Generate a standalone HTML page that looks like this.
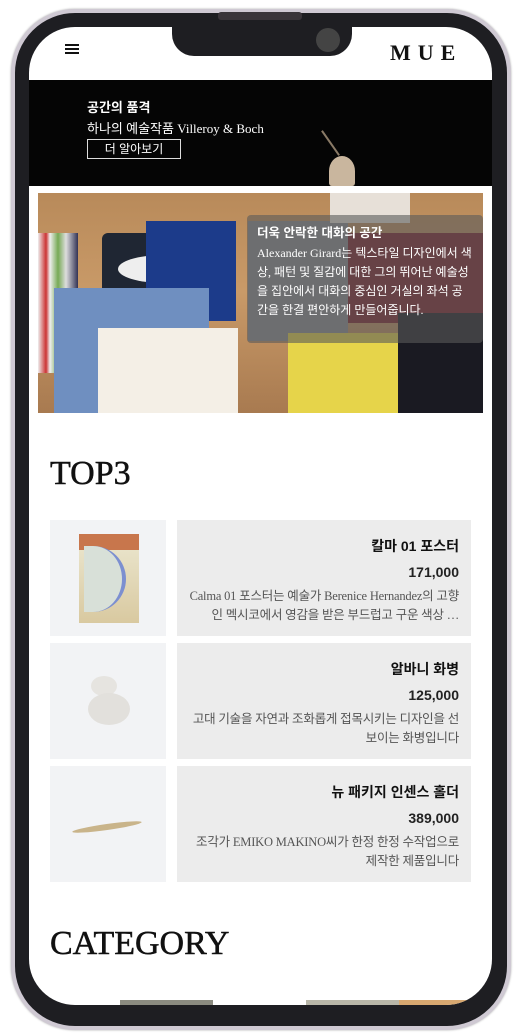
<!DOCTYPE html>
<html><head><meta charset="utf-8"><style>
*{margin:0;padding:0;box-sizing:border-box}
body{width:521px;height:1036px;background:#fff;position:relative;overflow:hidden;font-family:"Liberation Serif","Noto Serif CJK SC",serif}
.frame{position:absolute;left:11px;top:9px;width:500px;height:1021px;border-radius:64px;background:#1e1e22;border:4px solid #cfc9d3;box-shadow:0 0 2px #aaa}
.screen{position:absolute;left:29px;top:27px;width:463px;height:978px;border-radius:46px;background:#fff;overflow:hidden}
.notch{position:absolute;left:172px;top:27px;width:180px;height:29px;background:#1e1e22;border-radius:0 0 22px 22px}
.spk{position:absolute;left:218px;top:12px;width:84px;height:8px;background:#3a353a;border-radius:3px}
.cam{position:absolute;left:316px;top:28px;width:24px;height:24px;border-radius:50%;background:#444}
.sans{font-family:"Liberation Sans","Noto Sans CJK KR",sans-serif}
.ab{position:absolute}
.row{position:absolute;left:21px;width:421px;height:116px}
.img{position:absolute;left:0;top:0;width:116px;height:116px;background:#f2f3f5}
.info{position:absolute;left:127px;top:0;width:294px;height:116px;background:#ececec;text-align:right;padding:16px 12px 0 8px}
.t{font-family:"Liberation Sans","Noto Sans CJK KR",sans-serif;font-size:14px;font-weight:bold;color:#111;height:20px}
.p{font-family:"Liberation Sans","Noto Sans CJK KR",sans-serif;font-size:14px;font-weight:bold;color:#222;margin-top:8px;height:20px}
.d{font-size:12.5px;color:#555;line-height:19px;margin-top:3px;font-family:"Liberation Serif","Noto Sans CJK KR",serif;letter-spacing:-0.2px}
h2{position:absolute;left:21px;font-size:34px;font-weight:normal;color:#111;-webkit-text-stroke:0.5px #111}
</style></head><body>
<div class="frame"></div>
<div class="spk"></div>
<div class="screen">
  <div class="ab" style="left:36px;top:17px;width:14px;height:2px;background:#111;box-shadow:0 4px 0 #111,0 8px 0 #111"></div>
  <div class="ab" style="left:361px;top:13px;font-size:22px;font-weight:bold;letter-spacing:7px;color:#111">MUE</div>
  <div class="ab" style="left:0;top:53px;width:463px;height:106px;background:#050505">
    <div class="ab sans" style="left:58px;top:17px;color:#fff;font-size:13px;font-weight:bold">공간의 품격</div>
    <div class="ab" style="left:58px;top:38px;color:#fff;font-size:13px;font-family:'Liberation Serif','Noto Sans CJK KR',serif">하나의 예술작품 Villeroy &amp; Boch</div>
    <div class="ab sans" style="left:58px;top:59px;width:94px;height:20px;border:1px solid #ddd;color:#fff;font-size:12px;text-align:center;line-height:18px">더 알아보기</div>
    <div class="ab" style="left:300px;top:76px;width:26px;height:30px;background:#c9b69e;border-radius:50% 50% 10% 10%"></div>
    <div class="ab" style="left:298px;top:40px;width:30px;height:30px;border-left:2px solid #8a7a66;transform:rotate(-35deg)"></div>
  </div>
  <div class="ab" style="left:9px;top:166px;width:445px;height:220px;background:linear-gradient(180deg,#b88a5a 0,#c99a68 45%,#a87a50 100%);overflow:hidden">
    <div class="ab" style="left:0;top:40px;width:40px;height:140px;background:linear-gradient(90deg,#eee,#c33 20%,#eee 30%,#7a5 50%,#ddd 70%,#335)"></div>
    <div class="ab" style="left:64px;top:40px;width:120px;height:80px;background:#1f2633;border-radius:6px"></div>
    <div class="ab" style="left:80px;top:62px;width:90px;height:28px;background:#eee;border-radius:50%"></div>
    <div class="ab" style="left:108px;top:28px;width:90px;height:100px;background:#1c3b8a"></div>
    <div class="ab" style="left:16px;top:95px;width:155px;height:125px;background:#6f8fc0"></div>
    <div class="ab" style="left:60px;top:135px;width:140px;height:85px;background:#f4efe6"></div>
    <div class="ab" style="left:210px;top:28px;width:100px;height:120px;background:#8a8d92"></div>
    <div class="ab" style="left:292px;top:0;width:80px;height:30px;background:#e7e0d8"></div>
    <div class="ab" style="left:310px;top:40px;width:140px;height:90px;background:#7b1f2a"></div>
    <div class="ab" style="left:250px;top:140px;width:130px;height:80px;background:#e6d44a"></div>
    <div class="ab" style="left:360px;top:120px;width:85px;height:100px;background:#1a1a22"></div>
    <div class="ab" style="left:209px;top:22px;width:236px;height:128px;background:rgba(90,90,90,.6);border-radius:4px;padding:7px 10px;color:#fff">
      <div class="sans" style="font-size:12.5px;font-weight:bold">더욱 안락한 대화의 공간</div>
      <div style="font-size:12px;line-height:19px;margin-top:3px;font-family:'Liberation Serif','Noto Sans CJK KR',serif">Alexander Girard는 텍스타일 디자인에서 색상, 패턴 및 질감에 대한 그의 뛰어난 예술성을 집안에서 대화의 중심인 거실의 좌석 공간을 한결 편안하게 만들어줍니다.</div>
    </div>
  </div>
  <h2 style="top:428px">TOP3</h2>
  <div class="row" style="top:493px"><div class="img"><div class="ab" style="left:29px;top:14px;width:60px;height:89px;background:linear-gradient(180deg,#c8764c 0,#c8764c 18%,#e8e2c8 18%,#d9c9a0 100%)"></div><div class="ab" style="left:34px;top:26px;width:42px;height:66px;background:#d8e0d8;border-right:4px solid #7c8fd0;border-radius:0 40px 40px 0"></div></div>
    <div class="info"><div class="t">칼마 01 포스터</div><div class="p">171,000</div><div class="d">Calma 01 포스터는 예술가 Berenice Hernandez의 고향인 멕시코에서 영감을 받은 부드럽고 구운 색상 …</div></div></div>
  <div class="row" style="top:616px"><div class="img"><div class="ab" style="left:41px;top:33px;width:26px;height:20px;background:#e6e4e0;border-radius:50%"></div><div class="ab" style="left:38px;top:50px;width:42px;height:32px;background:#e2e0dc;border-radius:50%"></div></div>
    <div class="info"><div class="t">알바니 화병</div><div class="p">125,000</div><div class="d">고대 기술을 자연과 조화롭게 접목시키는 디자인을 선보이는 화병입니다</div></div></div>
  <div class="row" style="top:739px"><div class="img"><div class="ab" style="left:22px;top:58px;width:70px;height:6px;background:#c9b48a;border-radius:50%;transform:rotate(-8deg)"></div></div>
    <div class="info"><div class="t">뉴 패키지 인센스 홀더</div><div class="p">389,000</div><div class="d">조각가 EMIKO MAKINO씨가 한정 한정 수작업으로 제작한 제품입니다</div></div></div>
  <h2 style="top:898px">CATEGORY</h2>
  <div class="ab" style="left:91px;top:973px;width:93px;height:10px;background:#8b8b80"></div>
  <div class="ab" style="left:277px;top:973px;width:93px;height:10px;background:#b8b6a8"></div>
  <div class="ab" style="left:370px;top:973px;width:93px;height:10px;background:#d8a870"></div>
</div>
<div class="notch"></div>
<div class="cam"></div>
</body></html>
